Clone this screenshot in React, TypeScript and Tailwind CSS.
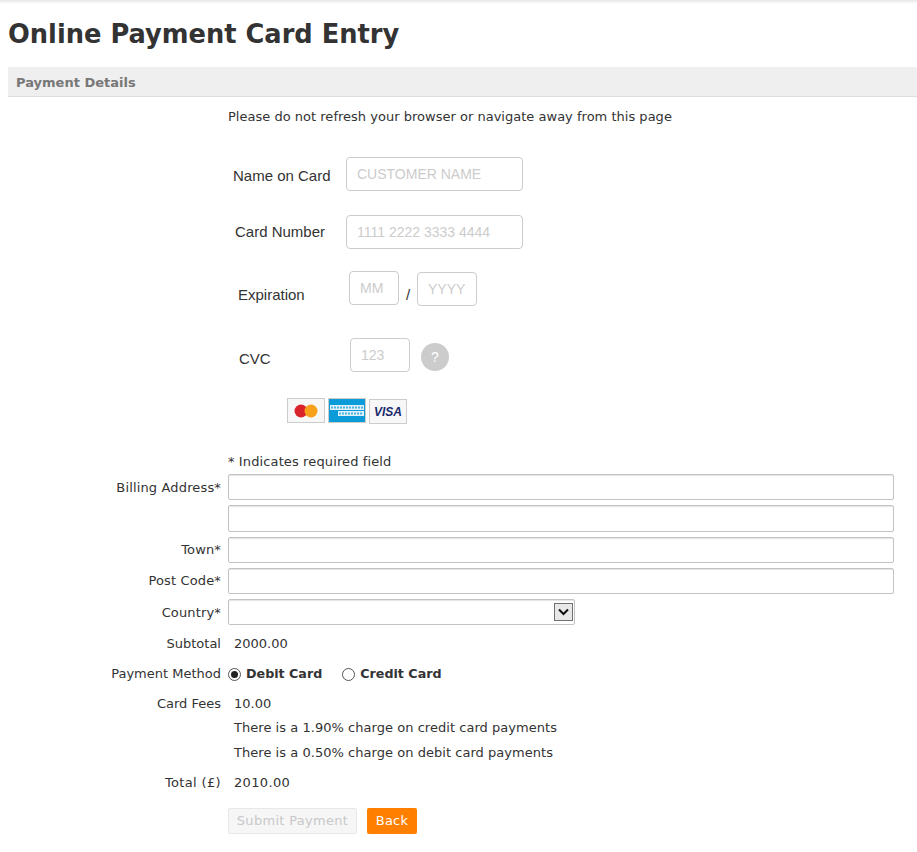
const labelCol = "w-[228px] shrink-0 pr-[7px] text-right";

const Row = ({ label, value, className }: { label: string; value: string; className?: string }) => (
  <div className={`flex h-[24px] items-center ${className ?? ""}`}>
    <div className={labelCol}>{label}</div>
    <div className="ml-[6px]">{value}</div>
  </div>
);

const AddressInput = ({ label, className, inputClass, labelClass }: { label?: string; className?: string; inputClass?: string; labelClass?: string }) => (
  <div className={`flex ${className ?? ""}`}>
    <div className={`${labelCol} h-[26px] tracking-[0.15px] ${labelClass ?? "leading-[26px]"}`}>{label}</div>
    <input className={`w-[666px] rounded-[2px] border border-[#c4c4c4] bg-white shadow-[inset_0_1px_1px_#e4e4e4] ${inputClass ?? "h-[26px]"}`} />
  </div>
);

const CardBox = ({ children, className }: { children: React.ReactNode; className?: string }) => (
  <div className={`flex h-[25px] w-[38px] items-center justify-center border border-[#ccc] ${className ?? ""}`}>{children}</div>
);

const App = () => {
  const arial = "font-['Liberation_Sans',sans-serif] text-[15px] text-[#333]";
  const field = "h-[34px] rounded-[4px] border border-[#ccc] bg-white px-[10px] font-['Liberation_Sans',sans-serif] text-[14px] outline-none placeholder:text-[#ccc]";

  return (
    <div className="min-h-[852px] overflow-hidden bg-white font-['DejaVu_Sans',sans-serif] text-[13px] text-[#333]">
      <div className="h-[4px] bg-gradient-to-b from-[#e8e8e8] to-white" />
      <h1 className="ml-[8px] mt-[12px] h-[51px] text-[25.7px] leading-[36px] font-bold text-[#333]">Online Payment Card Entry</h1>

      <div className="ml-[8px] h-[30px] border-b border-[#ddd] bg-[#efefef] pl-[8px] text-[13px] leading-[31px] font-bold text-[#777]">Payment Details</div>

      <p className="ml-[228px] mt-[10px] h-[19px] leading-[19px] tracking-[0.015px]">Please do not refresh your browser or navigate away from this page</p>

      <div className={arial}>
        <div className="mt-[31px] flex h-[34px] items-center pl-[233px]">
          <label className="mt-[5px] w-[113px]">Name on Card</label>
          <input className={`${field} w-[177px]`} placeholder="CUSTOMER NAME" />
        </div>
        <div className="mt-[24px] flex h-[34px] items-center pl-[235px]">
          <label className="w-[111px]">Card Number</label>
          <input className={`${field} w-[177px]`} placeholder="1111 2222 3333 4444" />
        </div>
        <div className="mt-[22px] flex h-[35px] pl-[238px]">
          <label className="mt-[13px] w-[111px]">Expiration</label>
          <input className={`${field} w-[50px]`} placeholder="MM" />
          <span className="ml-[7px] mt-[13px] w-[11px]">/</span>
          <input className={`${field} mt-[1px] w-[60px]`} placeholder="YYYY" />
        </div>
        <div className="mt-[32px] flex h-[34px] pl-[239px]">
          <label className="mt-[10px] w-[111px]">CVC</label>
          <input className={`${field} w-[60px]`} placeholder="123" />
          <div className="ml-[11px] mt-[5px] flex h-[28px] w-[28px] items-center justify-center rounded-full bg-[#ccc] text-[14px] text-white">?</div>
        </div>

        <div className="ml-[287px] mt-[26px] flex h-[26px] items-start gap-[3px]">
          <CardBox className="bg-[#f7f7f7]">
            <svg width="24" height="14" viewBox="0 0 24 14">
              <circle cx="7" cy="7" r="6.5" fill="#d9222a" />
              <circle cx="17" cy="7" r="6.5" fill="#f9a11b" />
            </svg>
          </CardBox>
          <CardBox className="bg-[#0a9bd8]">
            <svg width="36" height="23" viewBox="0 0 36 23">
              <rect x="1" y="6" width="34" height="5" fill="#dff1fa" />
              <rect x="9" y="12" width="26" height="5" fill="#dff1fa" />
              <path d="M2 8.5h32M10 14.5h24" stroke="#4fb4e2" strokeWidth="2" strokeDasharray="2 1" />
            </svg>
          </CardBox>
          <CardBox className="mt-[1px] bg-[#f7f7f7]">
            <span className="font-['Liberation_Sans',sans-serif] text-[12px] font-bold italic text-[#1a2a6c]">VISA</span>
          </CardBox>
        </div>
      </div>

      <p className="ml-[228px] mt-[27px] h-[23px] leading-[22px] tracking-[0.12px]">* Indicates required field</p>

      <AddressInput label="Billing Address*" labelClass="leading-[27px]" />
      <AddressInput className="mt-[5px]" inputClass="h-[27px]" />
      <AddressInput label="Town*" className="mt-[5px]" />
      <AddressInput label="Post Code*" className="mt-[5px]" />

      <div className="mt-[5px] flex">
        <div className={`${labelCol} h-[26px] leading-[27px] tracking-[0.15px]`}>Country*</div>
        <div className="flex h-[26px] w-[347px] items-center justify-end rounded-[2px] border border-[#c4c4c4] pr-[1px] shadow-[inset_0_1px_1px_#e4e4e4]">
          <div className="flex h-[18px] w-[19px] items-center justify-center border border-[#707070] bg-[#e8e8e8]">
            <svg width="11" height="8" viewBox="0 0 11 8" fill="none" stroke="#111" strokeWidth="2">
              <path d="M1 1.5l4.5 4.5 4.5-4.5" />
            </svg>
          </div>
        </div>
      </div>

      <div className="mt-[7px]">
        <Row label="Subtotal" value="2000.00" />
        <div className="mt-[6px] flex h-[24px] items-center">
          <div className={labelCol}>Payment Method</div>
          <span className="flex h-[13px] w-[13px] items-center justify-center rounded-full border border-[#555]">
            <span className="h-[7px] w-[7px] rounded-full bg-[#222]" />
          </span>
          <span className="ml-[5px] text-[12.7px] font-bold">Debit Card</span>
          <span className="ml-[20px] h-[13px] w-[13px] rounded-full border border-[#555]" />
          <span className="ml-[5px] text-[12.7px] font-bold">Credit Card</span>
        </div>
        <Row className="mt-[6px]" label="Card Fees" value="10.00" />
        <Row className="tracking-[0.04px]" label="" value="There is a 1.90% charge on credit card payments" />
        <Row className="mt-[1px] tracking-[0.04px]" label="" value="There is a 0.50% charge on debit card payments" />
        <Row className="mt-[6px] tracking-[0.35px]" label="Total (£)" value="2010.00" />
      </div>

      <div className="ml-[228px] mt-[13px] flex gap-[10px]">
        <button className="h-[26px] w-[129px] rounded-[2px] border border-[#e8e8e8] bg-[#f6f6f6] text-[13px] tracking-[0.3px] text-[#c8c8c8]">Submit Payment</button>
        <button className="h-[26px] w-[50px] rounded-[2px] bg-[#ff7f00] text-[13px] tracking-[0.2px] text-white">Back</button>
      </div>
    </div>
  );
};

export default App;
